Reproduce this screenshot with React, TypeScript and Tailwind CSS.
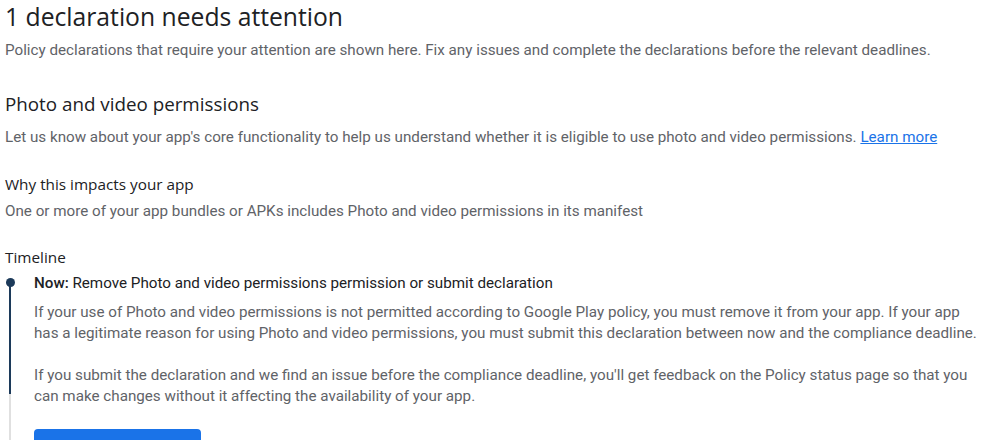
import React from 'react';

const heading = "font-['Open_Sans',sans-serif]";
const body = "font-['Roboto',sans-serif]";

export default function App() {
  return (
    <div className={`w-[1000px] h-[440px] overflow-hidden bg-white pl-[5px] pr-[4px] ${body}`}>
      <h1 className={`${heading} text-[24.7px] leading-[34px] text-[#202124]`}>1 declaration needs attention</h1>
      <p className="mt-[5.5px] text-[15.2px] leading-[21px] text-[#5f6368]">
        Policy declarations that require your attention are shown here. Fix any issues and complete the declarations before the relevant deadlines.
      </p>

      <h2 className={`${heading} mt-[30px] text-[18.8px] leading-[26px] text-[#202124]`}>Photo and video permissions</h2>
      <p className="mt-[10.5px] text-[15.2px] leading-[21px] text-[#5f6368]">
        Let us know about your app's core functionality to help us understand whether it is eligible to use photo and video permissions.{' '}
        <a href="#" className="text-[#1a73e8] underline">Learn more</a>
      </p>

      <h3 className={`${heading} mt-[25.5px] text-[15.3px] leading-[21px] text-[#202124]`}>Why this impacts your app</h3>
      <p className="mt-[6px] text-[15.2px] leading-[21px] text-[#5f6368]">
        One or more of your app bundles or APKs includes Photo and video permissions in its manifest
      </p>

      <h3 className={`${heading} mt-[25px] text-[15.3px] leading-[21px] text-[#202124]`}>Timeline</h3>

      <div className="relative mt-[5px] pl-[29px]">
        <div className="absolute left-[4px] top-[10px] w-[2px] h-[111px] bg-[#1c3a5a]" />
        <div className="absolute left-[4px] top-[121px] w-[2px] h-[100px] bg-[#e0e0e0]" />
        <div className="absolute left-[0.5px] top-[5px] w-[9px] h-[9px] rounded-full bg-[#1c3a5a]" />
        <p className="text-[15.2px] leading-[21px] text-[#202124]">
          <span className="font-medium">Now:</span> Remove Photo and video permissions permission or submit declaration
        </p>
        <p className="mt-[8px] w-[948px] text-[15.2px] leading-[21px] text-[#5f6368]">
          If your use of Photo and video permissions is not permitted according to Google Play policy, you must remove it from your app. If your app has a legitimate reason for using Photo and video permissions, you must submit this declaration between now and the compliance deadline.
        </p>
        <p className="mt-[21px] w-[948px] text-[15.2px] leading-[21px] text-[#5f6368]">
          If you submit the declaration and we find an issue before the compliance deadline, you'll get feedback on the Policy status page so that you can make changes without it affecting the availability of your app.
        </p>
        <button className="mt-[22.5px] w-[167px] h-[36px] rounded-[4px] bg-[#1a73e8]" />
      </div>
    </div>
  );
}
